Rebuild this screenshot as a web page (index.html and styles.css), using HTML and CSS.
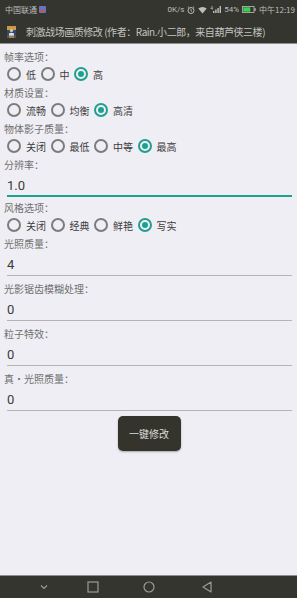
FILE: index.html
```html
<!DOCTYPE html>
<html lang="zh-CN">
<head>
<meta charset="utf-8">
<title>刺激战场画质修改</title>
<link rel="stylesheet" href="styles.css">
</head>
<body>
<div class="screen">
  <header class="top">
    <div class="status">
      <div class="status-left">
        <span>中国联通</span>
        <svg class="sim" width="7" height="7" viewBox="0 0 7 7"><rect x="0" y="0" width="7" height="7" rx="1" fill="#5a78c8"/><rect x="1.5" y="3.5" width="4" height="2.5" fill="#e04848"/></svg>
      </div>
      <div class="status-right">
        <span>0K/s</span>
        <svg width="8" height="8" viewBox="0 0 8 8"><circle cx="4" cy="4.5" r="3" fill="none" stroke="#bdbdbd" stroke-width="1"/><path d="M4 3v1.7l1 .8M0.8 1.6L2 .6M7.2 1.6L6 .6" stroke="#bdbdbd" stroke-width="0.9" fill="none"/></svg>
        <svg width="9" height="8" viewBox="0 0 9 8"><path d="M4.5 7.5L0.3 2.6A6.2 6.2 0 0 1 8.7 2.6Z" fill="#bdbdbd"/></svg>
        <span class="sig"><span class="tiny">4</span><svg width="8" height="7" viewBox="0 0 8 7"><rect x="0" y="5" width="1.4" height="2" fill="#bdbdbd"/><rect x="2.2" y="3.5" width="1.4" height="3.5" fill="#bdbdbd"/><rect x="4.4" y="2" width="1.4" height="5" fill="#bdbdbd"/><rect x="6.6" y="0" width="1.4" height="7" fill="#bdbdbd"/></svg></span>
        <span>54%</span>
        <svg width="14" height="7" viewBox="0 0 14 7"><rect x="0.5" y="0.5" width="11.5" height="6" fill="none" stroke="#bdbdbd" stroke-width="0.8"/><rect x="1.3" y="1.3" width="7" height="4.4" fill="#39d353"/><rect x="12.4" y="2.2" width="1.3" height="2.6" fill="#bdbdbd"/></svg>
        <span>中午12:19</span>
      </div>
    </div>
    <div class="titlebar">
      <svg class="appicon" width="9" height="12" viewBox="0 0 9 12"><rect width="9" height="12" fill="#2e4a7a"/><rect y="0" width="9" height="4" fill="#c89a4a"/><circle cx="4.5" cy="4.5" r="1.6" fill="#e8c9a0"/><path d="M2 12V7.5Q4.5 5.8 7 7.5V12Z" fill="#e8e2d0"/><rect x="0" y="9.5" width="9" height="2.5" fill="#7a5a3a" opacity="0.7"/></svg>
      <span class="title">刺激战场画质修改 (作者：Rain.小二郎，来自葫芦侠三楼)</span>
    </div>
  </header>

  <main class="content">
    <div class="label">帧率选项：</div>
    <div class="radios">
      <span class="radio"><span class="dot"></span>低</span>
      <span class="radio"><span class="dot"></span>中</span>
      <span class="radio on"><span class="dot"></span>高</span>
    </div>

    <div class="label">材质设置：</div>
    <div class="radios">
      <span class="radio"><span class="dot"></span>流畅</span>
      <span class="radio"><span class="dot"></span>均衡</span>
      <span class="radio on"><span class="dot"></span>高清</span>
    </div>

    <div class="label">物体影子质量：</div>
    <div class="radios">
      <span class="radio"><span class="dot"></span>关闭</span>
      <span class="radio"><span class="dot"></span>最低</span>
      <span class="radio"><span class="dot"></span>中等</span>
      <span class="radio on"><span class="dot"></span>最高</span>
    </div>

    <div class="label">分辨率：</div>
    <div class="field focused">1.0</div>

    <div class="label">风格选项：</div>
    <div class="radios">
      <span class="radio"><span class="dot"></span>关闭</span>
      <span class="radio"><span class="dot"></span>经典</span>
      <span class="radio"><span class="dot"></span>鲜艳</span>
      <span class="radio on"><span class="dot"></span>写实</span>
    </div>

    <div class="label">光照质量：</div>
    <div class="field">4</div>

    <div class="label">光影锯齿模糊处理：</div>
    <div class="field">0</div>

    <div class="label">粒子特效：</div>
    <div class="field">0</div>

    <div class="label">真•光照质量：</div>
    <div class="field">0</div>

    <div class="actions">
      <button class="btn">一键修改</button>
    </div>
  </main>

  <nav class="navbar">
    <svg class="nav-hide" width="10" height="8" viewBox="0 0 10 8"><path d="M2 2.5L5 5.5L8 2.5" fill="none" stroke="#9a9a9a" stroke-width="1.2"/></svg>
    <svg class="nav-recent" width="12" height="12" viewBox="0 0 12 12"><rect x="1" y="1" width="10" height="10" fill="none" stroke="#9a9a9a" stroke-width="1.2"/></svg>
    <svg class="nav-home" width="12" height="12" viewBox="0 0 12 12"><circle cx="6" cy="6" r="5" fill="none" stroke="#9a9a9a" stroke-width="1.2"/></svg>
    <svg class="nav-back" width="12" height="12" viewBox="0 0 12 12"><path d="M10 1L2 6L10 11Z" fill="none" stroke="#9a9a9a" stroke-width="1.2" stroke-linejoin="round"/></svg>
  </nav>
</div>
</body>
</html>
```

FILE: styles.css
```css
* { box-sizing: border-box; }
html, body { margin: 0; padding: 0; }
body {
  width: 297px;
  height: 598px;
  overflow: hidden;
  background: #efeef4;
  font-family: "Noto Sans CJK SC", "Noto Sans", sans-serif;
}
.screen {
  width: 297px;
  height: 598px;
  display: flex;
  flex-direction: column;
}
.top {
  background: #35352f;
  border-bottom: 1px solid #8e8e8a;
  height: 44px;
  flex: none;
}
.status {
  height: 21px;
  display: flex;
  justify-content: space-between;
  align-items: center;
  padding: 0 2px 2px 5px;
  color: #bdbdbd;
  font-size: 8px;
}
.status-left, .status-right {
  display: flex;
  align-items: center;
  gap: 2px;
}
.status-right { gap: 3px; font-family: Roboto, "Noto Sans CJK SC", sans-serif; }
.status-right span:last-child { font-family: "Noto Sans CJK SC", sans-serif; }
.sig { display: flex; align-items: flex-start; }
.tiny { font-size: 5px; line-height: 5px; }
.titlebar {
  height: 22px;
  display: flex;
  align-items: center;
  padding-left: 7px;
  padding-bottom: 1px;
}
.appicon { flex: none; }
.title {
  margin-left: 10px;
  font-size: 10px;
  color: #c4c4c0;
  white-space: nowrap;
  letter-spacing: -0.45px;
}
.content {
  flex: 1;
  padding: 4px 5px 0 4px;
  color: #333;
}
.label {
  font-size: 10px;
  line-height: 14px;
  padding-top: 2px;
  height: 16px;
  color: #707070;
}
.radios {
  height: 20px;
  display: flex;
  align-items: center;
  padding-left: 3px;
}
.radio {
  display: flex;
  align-items: center;
  font-size: 10px;
  color: #3c3c3c;
  margin-right: 4.5px;
}
.dot {
  width: 14px;
  height: 14px;
  border: 2px solid #7c7c7c;
  border-radius: 50%;
  margin-right: 5px;
  display: flex;
  align-items: center;
  justify-content: center;
}
.radio.on .dot { border-color: #1fa08f; }
.radio.on .dot::after {
  content: "";
  width: 6px;
  height: 6px;
  border-radius: 50%;
  background: #1fa08f;
}
.field {
  margin: 0 0 4px 3px;
  padding: 6px 0 2px 0;
  line-height: 16px;
  font-size: 13px;
  font-family: Roboto, "Noto Sans CJK SC", sans-serif;
  color: #3a3a3a;
  border-bottom: 1px solid #b4b4b4;
}
.field.focused {
  padding-bottom: 1px;
  border-bottom: 2px solid #1fa08f;
  margin-bottom: 2px;
}
.actions {
  display: flex;
  justify-content: center;
  padding-top: 1px;
  padding-left: 2px;
}
.btn {
  width: 63px;
  height: 35px;
  border: none;
  border-radius: 5px;
  background: #34342d;
  color: #dcdcd8;
  font-family: "Noto Sans CJK SC", sans-serif;
  font-size: 10px;
  padding: 0;
  box-shadow: 0 1px 2px rgba(0,0,0,0.3);
}
.navbar {
  flex: none;
  height: 23px;
  background: #35352f;
  border-top: 1px solid #8e8e8a;
  display: flex;
  align-items: center;
  padding-left: 39px;
}
.nav-recent { margin-left: 38px; }
.nav-home { margin-left: 44px; }
.nav-back { margin-left: 46px; }
```
